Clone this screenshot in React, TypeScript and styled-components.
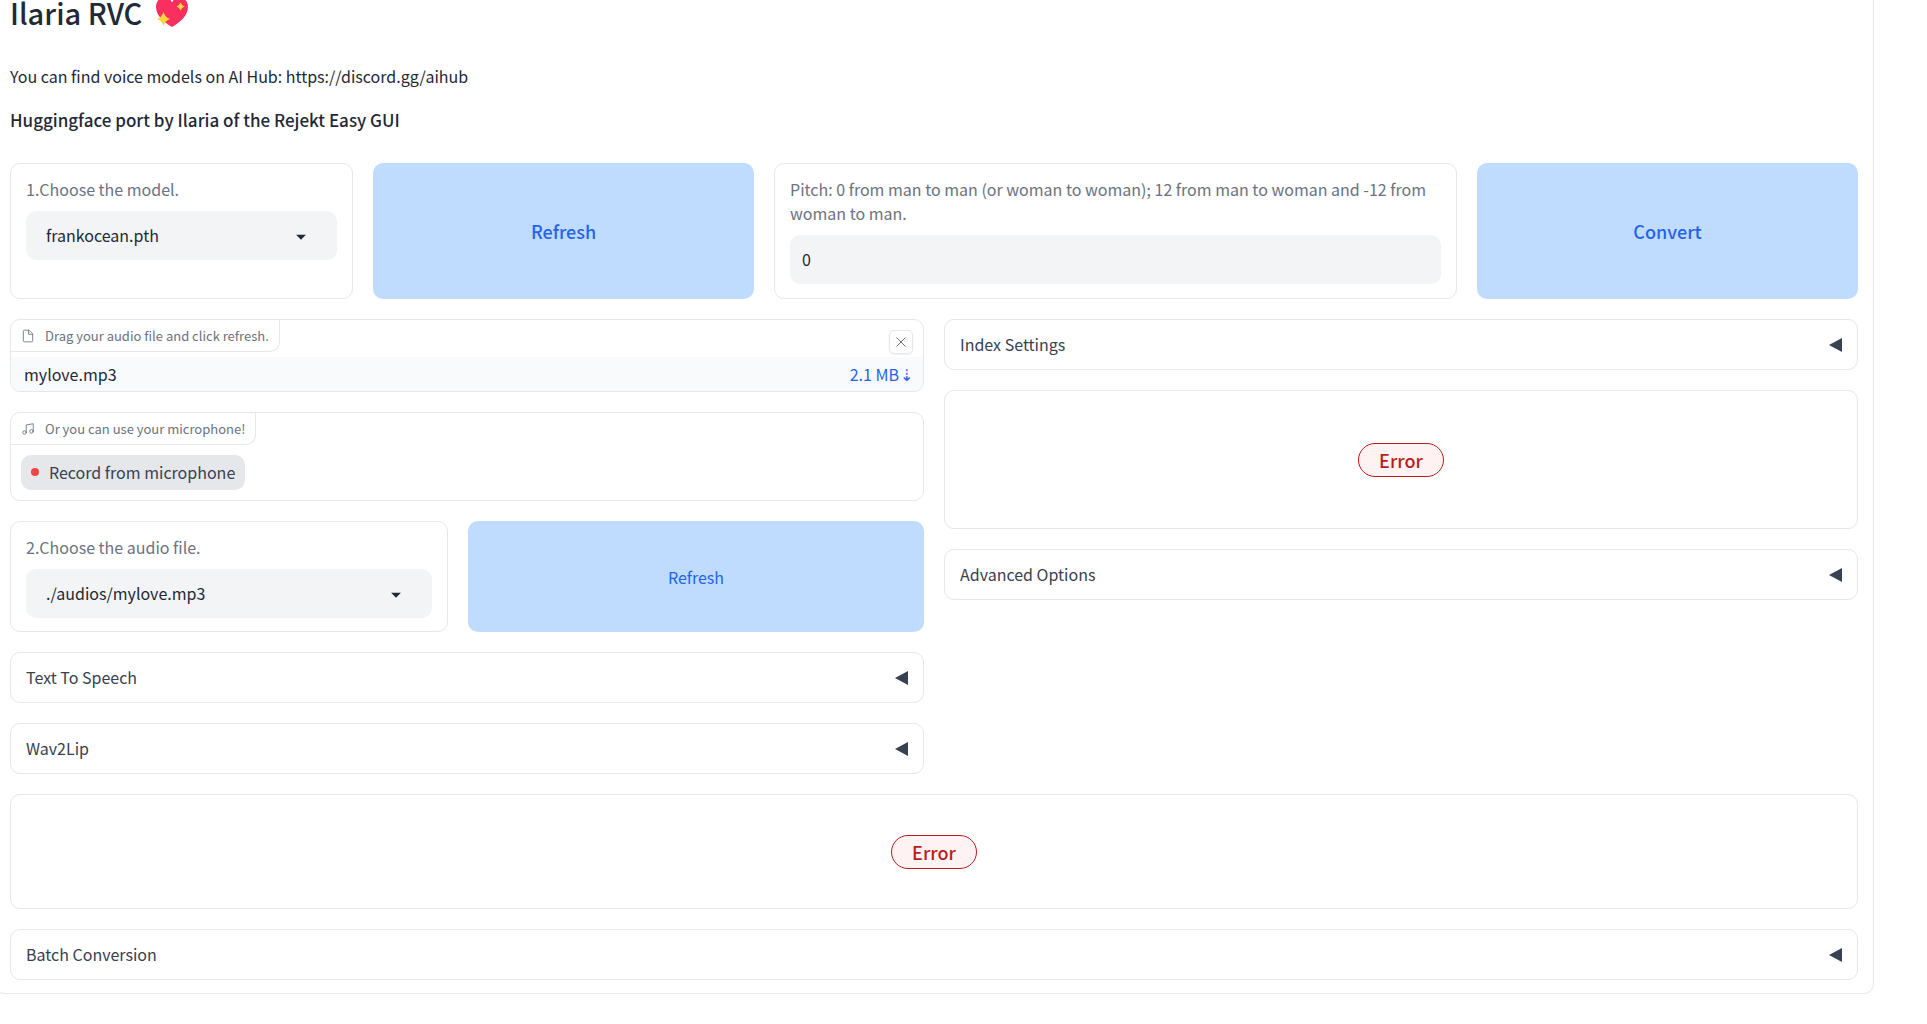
import React from "react";
import styled, { createGlobalStyle, css } from "styled-components";

const GlobalStyle = createGlobalStyle`
  *, *::before, *::after { box-sizing: border-box; }
  body {
    margin: 0;
    background: #ffffff;
    color: #1f2937;
    font-family: "Noto Sans CJK SC", "Noto Sans", sans-serif;
    font-size: 16px;
    line-height: 24px;
    overflow-x: hidden;
  }
  button, input, select { font: inherit; color: inherit; margin: 0; }
  h1, h3, p { margin: 0; }
`;

const Panel = styled.main`
  display: flex;
  flex-direction: column;
  gap: 20px;
  margin: -17px 53px 30px -6px;
  padding: 0 15px 13px;
  border: 1px solid #e5e7eb;
  border-radius: 10px;
`;

const Intro = styled.header`
  display: flex;
  flex-direction: column;
  gap: 20px;
  padding-bottom: 11px;
`;

const Title = styled.h1`
  display: flex;
  align-items: center;
  gap: 13px;
  font-size: 29px;
  line-height: 56px;
  font-weight: 500;
`;

const Heart = styled.svg`
  width: 34px;
  height: 34px;
`;

const Lead = styled.p`
  padding-top: 4px;
`;

const Subtitle = styled.h3`
  font-size: 17px;
  font-weight: 500;
`;

const Row = styled.div<{ $columns: string; $minHeight?: number }>`
  display: grid;
  grid-template-columns: ${(p) => p.$columns};
  gap: 20px;
  min-height: ${(p) => p.$minHeight ?? 0}px;
`;

const Column = styled.div`
  display: flex;
  flex-direction: column;
  gap: 20px;
  min-width: 0;
`;

const block = css`
  border: 1px solid #e5e7eb;
  border-radius: 10px;
  background: #ffffff;
  min-width: 0;
`;

const Field = styled.div`
  ${block}
  padding: 13px 15px;
`;

const FieldLabel = styled.label`
  display: block;
  margin-bottom: 10px;
  color: #6b7280;
`;

const control = css`
  display: block;
  width: 100%;
  height: 49px;
  border: 0;
  border-radius: 10px;
  background: #f3f4f6;
  color: #1f2937;
`;

const SelectWrap = styled.div`
  position: relative;
`;

const Select = styled.select`
  ${control}
  appearance: none;
  padding: 0 52px 2px 20px;
`;

const Caret = styled.svg`
  position: absolute;
  top: 14px;
  right: 25px;
  width: 22px;
  height: 22px;
  fill: #1f2937;
  pointer-events: none;
`;

const NumberInput = styled.input`
  ${control}
  padding: 0 12px 2px;
  appearance: textfield;
`;

const ActionButton = styled.button<{ $large?: boolean }>`
  border: 0;
  border-radius: 10px;
  background: #bfdbfe;
  color: #2563eb;
  cursor: pointer;
  ${(p) => p.$large && css`
    font-size: 18px;
    font-weight: 500;
  `}
`;

const MediaBlock = styled.section`
  ${block}
  overflow: hidden;
`;

const MediaHead = styled.div`
  display: flex;
  justify-content: space-between;
  align-items: flex-start;
`;

const Tag = styled.div`
  display: flex;
  align-items: center;
  gap: 10px;
  height: 32px;
  padding: 0 10px;
  border: solid #e5e7eb;
  border-width: 0 1px 1px 0;
  border-bottom-right-radius: 10px;
  color: #6b7280;
  font-size: 13px;
  line-height: 20px;
`;

const TagIcon = styled.svg`
  width: 14px;
  height: 14px;
  fill: none;
  stroke: #6b7280;
  stroke-width: 1.5;
  stroke-linecap: round;
  stroke-linejoin: round;
`;

const CloseButton = styled.button`
  display: grid;
  place-items: center;
  width: 24px;
  height: 24px;
  margin: 10px 10px 3px;
  padding: 0;
  border: 1px solid #e5e7eb;
  border-radius: 5px;
  background: #ffffff;
  box-shadow: 0 1px 2px rgba(0, 0, 0, 0.06);
  color: #6b7280;
  cursor: pointer;
  svg { width: 10px; height: 10px; stroke: currentColor; }
`;

const FileRow = styled.div`
  display: flex;
  justify-content: space-between;
  padding: 5px 10px 5px 13px;
  background: #f9fafb;
`;

const DownloadLink = styled.a`
  display: flex;
  gap: 1px;
  color: #2563eb;
  text-decoration: none;
`;

const RecordButton = styled.button`
  display: flex;
  align-items: center;
  gap: 10px;
  height: 35px;
  margin: 10px;
  padding: 0 10px 1px;
  border: 0;
  border-radius: 10px;
  background: #e5e7eb;
  color: #374151;
  cursor: pointer;
  &::before {
    content: "";
    width: 8px;
    height: 8px;
    border-radius: 50%;
    background: #ef4444;
  }
`;

const AccordionButton = styled.button`
  ${block}
  display: flex;
  align-items: center;
  justify-content: space-between;
  width: 100%;
  height: 51px;
  padding: 0 15px;
  color: #374151;
  text-align: left;
  cursor: pointer;
`;

const AccordionLabel = styled.span`
  padding-bottom: 2px;
`;

const Arrow = styled.svg`
  width: 13px;
  height: 14px;
  fill: #374151;
`;

const ErrorBlock = styled.div<{ $height: number }>`
  ${block}
  display: grid;
  place-items: center;
  min-height: ${(p) => p.$height}px;
`;

const ErrorPill = styled.span`
  padding: 4px 20px;
  border: 1px solid #b91c1c;
  border-radius: 17px;
  background: #fef2f2;
  color: #b91c1c;
  font-size: 18px;
  font-weight: 500;
`;

function Accordion({ label }: { label: string }) {
  return (
    <AccordionButton type="button" aria-expanded={false}>
      <AccordionLabel>{label}</AccordionLabel>
      <Arrow viewBox="0 0 13 14" aria-hidden="true">
        <path d="M13 0v14L0 7z" />
      </Arrow>
    </AccordionButton>
  );
}

function Dropdown({ id, label, value }: { id: string; label: string; value: string }) {
  return (
    <Field>
      <FieldLabel htmlFor={id}>{label}</FieldLabel>
      <SelectWrap>
        <Select id={id} defaultValue={value}>
          <option value={value}>{value}</option>
        </Select>
        <Caret viewBox="0 0 18 18" aria-hidden="true">
          <path d="M5 8l4 4 4-4z" />
        </Caret>
      </SelectWrap>
    </Field>
  );
}

function SparklingHeart() {
  return (
    <Heart viewBox="0 0 34 34" role="img" aria-label="Sparkling heart">
      <path
        fill="#f92f60"
        d="M17 32C12 29 1 22 1 12C1 6 5 2.500 9.500 2.500C13 2.500 16 4.500 17 7.500C18 4.500 21 2.500 24.500 2.500C29 2.500 33 6 33 12C33 22 22 29 17 32z"
      />
      <path fill="#fcd53f" d="M8.500 17Q10.200 22.300 15 24Q10.200 25.700 8.500 31Q6.800 25.700 2 24Q6.800 22.300 8.500 17z" />
      <path fill="#fcd53f" d="M25.500 7.500Q26.600 10.400 29.500 11.500Q26.600 12.600 25.500 15.500Q24.400 12.600 21.500 11.500Q24.400 10.400 25.500 7.500z" />
    </Heart>
  );
}

export default function App() {
  return (
    <>
      <GlobalStyle />
      <Panel>
        <Intro>
          <Title>
            Ilaria RVC <SparklingHeart />
          </Title>
          <Lead>You can find voice models on AI Hub: https://discord.gg/aihub</Lead>
          <Subtitle>Huggingface port by Ilaria of the Rejekt Easy GUI</Subtitle>
        </Intro>

        <Row $columns="343fr 381fr 683fr 381fr" $minHeight={136}>
          <Dropdown id="model" label="1.Choose the model." value="frankocean.pth" />
          <ActionButton type="button" $large>Refresh</ActionButton>
          <Field>
            <FieldLabel htmlFor="pitch">
              Pitch: 0 from man to man (or woman to woman); 12 from man to woman and -12 from woman to man.
            </FieldLabel>
            <NumberInput id="pitch" type="number" defaultValue={0} />
          </Field>
          <ActionButton type="button" $large>Convert</ActionButton>
        </Row>

        <Row $columns="1fr 1fr">
          <Column>
            <MediaBlock>
              <MediaHead>
                <Tag>
                  <TagIcon viewBox="0 0 24 24" aria-hidden="true">
                    <path d="M13 2H6a2 2 0 0 0-2 2v16a2 2 0 0 0 2 2h12a2 2 0 0 0 2-2V9z" />
                    <path d="M13 2v7h7" />
                  </TagIcon>
                  Drag your audio file and click refresh.
                </Tag>
                <CloseButton type="button" aria-label="Clear">
                  <svg viewBox="0 0 10 10" aria-hidden="true">
                    <path d="M0.500 0.500l9 9M9.500 0.500l-9 9" />
                  </svg>
                </CloseButton>
              </MediaHead>
              <FileRow>
                <span>mylove.mp3</span>
                <DownloadLink href="#download">
                  <span>2.1 MB</span>
                  <span>⇣</span>
                </DownloadLink>
              </FileRow>
            </MediaBlock>

            <MediaBlock>
              <MediaHead>
                <Tag>
                  <TagIcon viewBox="0 0 24 24" aria-hidden="true">
                    <path d="M9 18V5l12-2v13" />
                    <circle cx="6" cy="18" r="3" />
                    <circle cx="18" cy="16" r="3" />
                  </TagIcon>
                  Or you can use your microphone!
                </Tag>
              </MediaHead>
              <RecordButton type="button">Record from microphone</RecordButton>
            </MediaBlock>

            <Row $columns="438fr 456fr">
              <Dropdown id="audio" label="2.Choose the audio file." value="./audios/mylove.mp3" />
              <ActionButton type="button">Refresh</ActionButton>
            </Row>

            <Accordion label="Text To Speech" />
            <Accordion label="Wav2Lip" />
          </Column>

          <Column>
            <Accordion label="Index Settings" />
            <ErrorBlock $height={139}>
              <ErrorPill>Error</ErrorPill>
            </ErrorBlock>
            <Accordion label="Advanced Options" />
          </Column>
        </Row>

        <ErrorBlock $height={115}>
          <ErrorPill>Error</ErrorPill>
        </ErrorBlock>
        <Accordion label="Batch Conversion" />
      </Panel>
    </>
  );
}
